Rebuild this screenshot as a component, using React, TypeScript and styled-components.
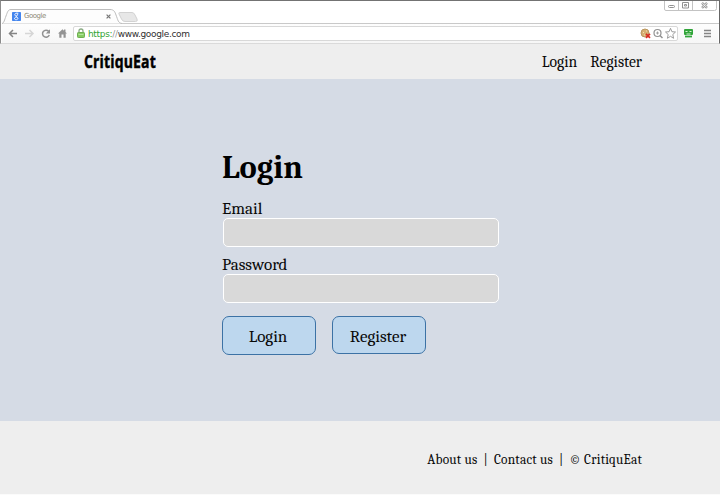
import React from "react";
import styled, { createGlobalStyle } from "styled-components";

const GlobalStyle = createGlobalStyle`
  * { box-sizing: border-box; }
  body { margin: 0; background: #fbfbfb; }
`;

const Page = styled.div`
  width: 720px;
  height: 495px;
  display: flex;
  flex-direction: column;
  overflow: hidden;
  color: #080808;
  font-family: Cambria, Caladea, "Liberation Serif", serif;
`;

const Browser = styled.div`
  height: 44px;
  flex: none;
  display: flex;
  flex-direction: column;
  position: relative;
  background: #fff;
  border-top: 1px solid #737373;
  border-left: 1px solid #8b8b8b;
  border-right: 1px solid #666;
  border-bottom: 1px solid #dadada;
`;

const TabStrip = styled.div`
  height: 23px;
  display: flex;
  justify-content: space-between;
  border-bottom: 1px solid #c9c9c9;
  margin: 0 0 0 1px;
`;

const TabArea = styled.div`
  position: relative;
  width: 140px;
  height: 23px;
  padding-top: 8px;
`;

const TabShape = styled.svg`
  display: block;
`;

const TabContent = styled.div`
  position: absolute;
  left: 10px;
  top: 10px;
  width: 99px;
  height: 11px;
  display: flex;
  align-items: center;
`;

const TabTitle = styled.span`
  flex: 1;
  padding-left: 3px;
  font: 7px/11px "DejaVu Sans", sans-serif;
  letter-spacing: -0.5px;
  color: #8f8c78;
`;

const WindowControls = styled.svg`
  flex: none;
`;

const Toolbar = styled.div`
  height: 19px;
  margin: 0 1px;
  padding: 2px 4px 0 5px;
  display: flex;
  background: linear-gradient(#fdfdfd, #f6f6f6);
`;

const NavIcons = styled.svg`
  flex: none;
  width: 66px;
  height: 16px;
`;

const AddressBar = styled.div`
  width: 607px;
  height: 15px;
  padding-left: 3px;
  display: flex;
  align-items: center;
  border: 1px solid #d8d8d8;
  border-radius: 2px;
  background: #fff;
`;

const Address = styled.span`
  flex: 1;
  padding: 1px 0 0 3px;
  font: 9px/13px "DejaVu Sans", sans-serif;
  letter-spacing: -0.33px;
  color: #303030;
`;

const Secure = styled.span`
  color: #31a331;
`;

const Slashes = styled.span`
  color: #999;
`;

const AddressIcons = styled.svg`
  flex: none;
  margin-right: -2px;
`;

const MenuIcons = styled.svg`
  flex: none;
  width: 36px;
  height: 15px;
`;

const Header = styled.header`
  height: 35px;
  flex: none;
  display: flex;
  justify-content: space-between;
  align-items: center;
  padding: 1px 78px 0 84px;
  background: #eee;
`;

const Brand = styled.span`
  font: 700 17.5px/24px "Open Sans", sans-serif;
  color: #000;
  -webkit-text-stroke: 0.45px #000;
  letter-spacing: 0.2px;
  transform: translateY(-1px) scaleX(0.8);
  transform-origin: left center;
  white-space: nowrap;
`;

const Nav = styled.nav`
  display: flex;
  gap: 13px;
`;

const NavLink = styled.a`
  font-size: 15.6px;
  line-height: 20px;
`;

const Main = styled.main`
  height: 342px;
  flex: none;
  padding: 69px 221px 0 222px;
  background: #d5dbe5;
`;

const Title = styled.h1`
  margin: 0 0 10px;
  font-size: 32.5px;
  line-height: 40px;
  font-weight: 700;
  color: #000;
`;

const Field = styled.div`
  height: 56px;
  display: flex;
  flex-direction: column;
`;

const Label = styled.label`
  height: 20px;
  font-size: 17px;
  line-height: 22px;
`;

const Input = styled.input`
  width: 276px;
  height: 29px;
  margin: 0 0 0 1px;
  padding: 0 8px;
  border: 1px solid #fff;
  border-radius: 5px;
  background: #d9d9d9;
  font: inherit;
  outline: none;
`;

const Actions = styled.div`
  display: flex;
  align-items: flex-start;
  gap: 16px;
  padding-top: 6px;
`;

const Button = styled.button<{ $height: number }>`
  width: 94px;
  height: ${(p) => p.$height}px;
  padding: 3px 2px 0 0;
  display: flex;
  justify-content: center;
  border: 1px solid #3c72a5;
  border-radius: 7px;
  background: #bdd7ee;
  color: #080808;
  font: 17px/34px Cambria, Caladea, "Liberation Serif", serif;
`;

const Footer = styled.footer`
  height: 73px;
  flex: none;
  display: flex;
  justify-content: flex-end;
  align-items: center;
  gap: 6px;
  padding: 5px 78px 0 0;
  background: #eee;
  font-size: 13.4px;
  line-height: 18px;
  letter-spacing: 0.2px;
`;

export default function App() {
  return (
    <Page>
      <GlobalStyle />
      <Browser>
        <TabStrip>
          <TabArea>
            <TabShape width="140" height="15" fill="none">
              <path d="M0 14.5C2 14 2.5 11 4 7 5.5 3 6 .5 9 .5H108C112 .5 113 3 114 6 116 11 116 14 120 14.5" fill="#fdfdfd" stroke="#bdbdbd" />
              <path d="M117.500 3.500H130Q132 3.500 133 6L135 10Q136 12.500 133.500 12.500H123Q120.500 12.500 119.500 10L117 5Q116.500 3.500 117.500 3.500Z" fill="#e7e7e7" stroke="#d2d2d2" />
            </TabShape>
            <TabContent>
              <svg width="9" height="9" fill="none">
                <rect width="9" height="9" rx=".7" fill="#4385ee" />
                <path d="M6.400 1.200H4.300C2.200 1.400 2.500 4 4.200 4c1.800 0 1.800-2.400.5-2.600M4.300 4c-.5.700 1.600 1 1.600 2.400C5.900 8.200 2.500 8.100 2.500 6.600c0-1.100 1.200-1.400 2.300-1.400" stroke="#fff" strokeWidth=".9" />
              </svg>
              <TabTitle>Google</TabTitle>
              <svg width="5" height="5">
                <path d="M.6.6 4.400 4.400M4.400.6.6 4.400" stroke="#777" strokeWidth="1.200" />
              </svg>
            </TabContent>
          </TabArea>
          <WindowControls width="55" height="11" fill="none">
            <path d="M.5 0V8Q.5 9.500 2 9.500H50.500Q52.500 9.500 52.500 7.500V0M14.500 0V9M28.500 0V9" stroke="#c3c3c3" />
            <rect x="4.500" y="4.500" width="6" height="2" rx="1" stroke="#929292" />
            <path d="M18.500 1.500h6v5.500h-6zM20.500 3.500h2v1.500h-2z" stroke="#929292" />
            <path d="m38 1.800 5 5M43 1.800l-5 5" stroke="#9a9a9a" strokeWidth="2.400" />
            <path d="m38.300 2.100 4.400 4.400M42.700 2.100l-4.400 4.400" stroke="#fff" strokeWidth=".8" />
          </WindowControls>
        </TabStrip>
        <Toolbar>
          <NavIcons fill="none" viewBox="0 0 66 16">
            <path d="M10 7.500H3M6 4 2.500 7.500 6 11" stroke="#858585" strokeWidth="1.500" />
            <path d="M18 7.500h7M22.500 4 26 7.500 22.500 11" stroke="#d6d6d6" strokeWidth="1.500" />
            <path d="M41.600 5.300A3.500 3.500 0 1 0 42.300 9" stroke="#929292" strokeWidth="1.500" />
            <path d="M43 3.300v4.200h-4.200z" fill="#929292" />
            <path d="m51 7.600 4.500-4.300L57 4.700V3.500h1.500v2.600L60 7.600h-1.300v4.200H56.500V8.600h-2v3.200H52.300V7.600z" fill="#939393" />
          </NavIcons>
          <AddressBar>
            <svg width="8" height="11" fill="none">
              <path d="M2 5V3q0-2 2-2t2 2v2" stroke="#8aab84" strokeWidth="1.300" />
              <rect x=".5" y="4.500" width="7" height="5" rx=".8" fill="#86cb62" stroke="#6eae52" />
              <path d="M1.500 6.500h5" stroke="#b3e49c" />
            </svg>
            <Address>
              <Secure>https:</Secure><Slashes>//</Slashes>www.google.com
            </Address>
            <AddressIcons width="40" height="13" fill="none">
              <circle cx="6" cy="6" r="4" fill="#d6b071" stroke="#b99660" />
              <path d="M4 5.500h1M7 4h1M5 8h1" stroke="#f5dfb6" />
              <path d="m7 6.800 4 4M11 6.800l-4 4" stroke="#d92c22" strokeWidth="1.700" />
              <circle cx="18.500" cy="6" r="3.500" stroke="#929292" strokeWidth="1.200" />
              <path d="m21 8.500 2.500 2.500" stroke="#929292" strokeWidth="1.500" />
              <path d="M17 6h3M18.500 4.500v3" stroke="#929292" strokeWidth=".8" />
              <path d="m31.500 1.300 1.400 3.400 3.600.3-2.700 2.500.8 3.800-3.100-2-3.100 2 .8-3.800-2.700-2.500 3.600-.3z" stroke="#929292" strokeWidth=".9" />
            </AddressIcons>
          </AddressBar>
          <MenuIcons fill="none" viewBox="0 0 36 15">
            <rect x="6" y="3" width="9" height="6" rx="1" fill="#31a53a" />
            <path d="M7 10.500h7" stroke="#31a53a" strokeWidth="1.800" />
            <path d="M7.500 5.500h2M11.500 5.500h2M8.500 8h4" stroke="#d8f2d5" />
            <path d="M26 4.500h7M26 7.500h7M26 10.500h7" stroke="#858585" strokeWidth="1.300" />
          </MenuIcons>
        </Toolbar>
      </Browser>
      <Header>
        <Brand>CritiquEat</Brand>
        <Nav>
          <NavLink>Login</NavLink>
          <NavLink>Register</NavLink>
        </Nav>
      </Header>
      <Main>
        <Title>Login</Title>
        <Field>
          <Label htmlFor="email">Email</Label>
          <Input id="email" type="email" />
        </Field>
        <Field>
          <Label htmlFor="password">Password</Label>
          <Input id="password" type="password" />
        </Field>
        <Actions>
          <Button $height={39}>Login</Button>
          <Button $height={38}>Register</Button>
        </Actions>
      </Main>
      <Footer>
        <span>About us</span>
        <span>|</span>
        <span>Contact us</span>
        <span>|</span>
        <span>© CritiquEat</span>
      </Footer>
    </Page>
  );
}
